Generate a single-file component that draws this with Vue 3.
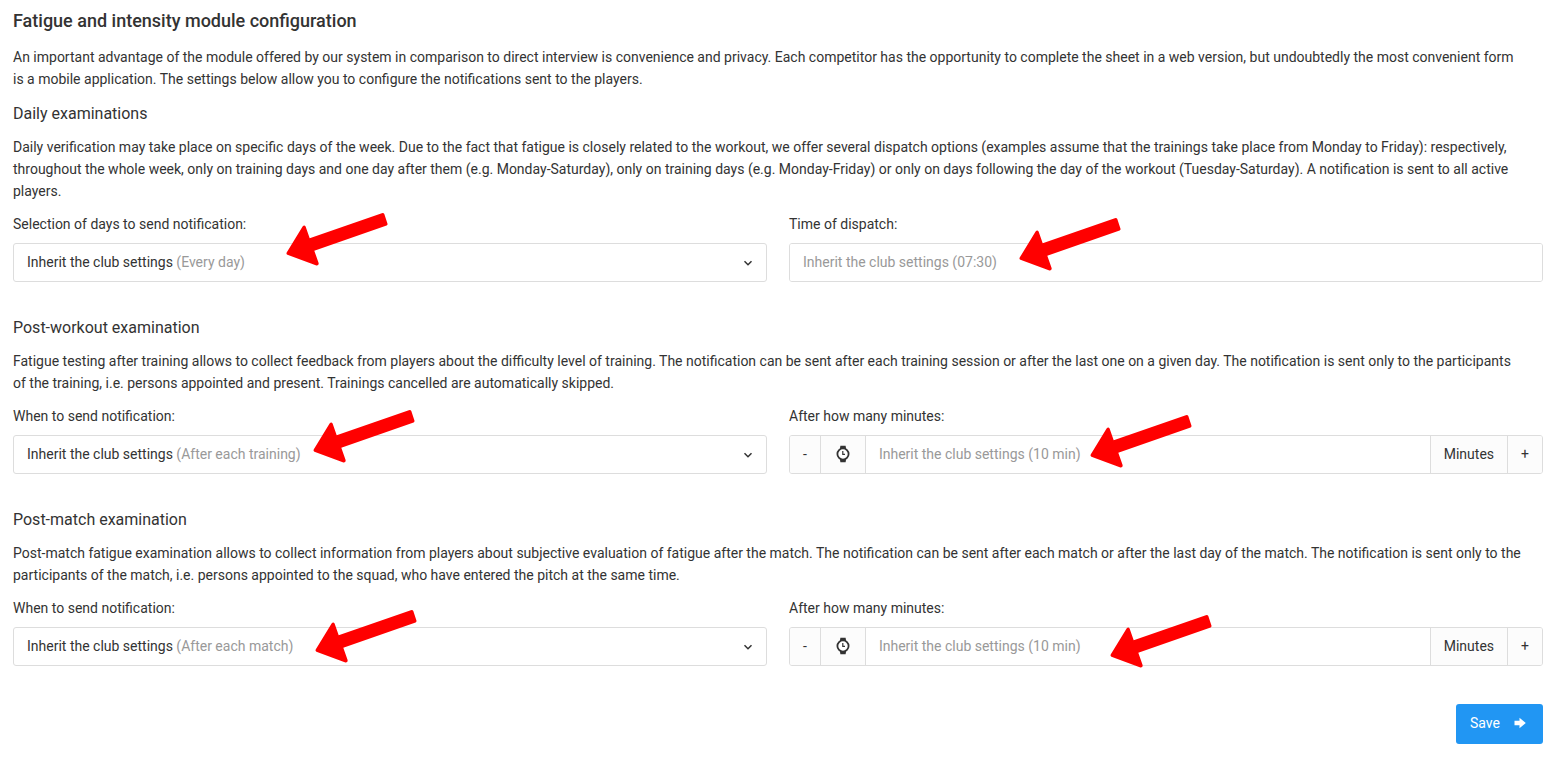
<template>
  <main class="page">
    <h1>Fatigue and intensity module configuration</h1>
    <p class="intro">
      An important advantage of the module offered by our system in comparison to direct interview is convenience and
      privacy. Each competitor has the opportunity to complete the sheet in a web version, but undoubtedly the most
      convenient form is a mobile application. The settings below allow you to configure the notifications sent to the
      players.
    </p>

    <form @submit.prevent>
      <section v-for="section in sections" :key="section.id">
        <h2>{{ section.title }}</h2>
        <p>{{ section.description }}</p>

        <div class="row">
          <div class="field">
            <label :for="section.id + '-when'">{{ section.whenLabel }}</label>
            <div class="select">
              <select :id="section.id + '-when'" v-model="section.when">
                <option v-for="option in section.options" :key="option" :value="option">{{ option }}</option>
              </select>
              <div class="select-value" aria-hidden="true">
                {{ section.when }}
                <span v-if="section.when === inherit" class="muted">({{ section.clubValue }})</span>
              </div>
              <svg class="caret" viewBox="0 0 10 10" aria-hidden="true">
                <path d="M1.5 3.2 5 6.7 8.5 3.2" />
              </svg>
            </div>
            <svg class="arrow" viewBox="0 0 102 55" :style="place(section.arrows[0])" aria-hidden="true">
              <path :d="arrowPath" />
            </svg>
          </div>

          <div class="field">
            <label :for="section.id + '-time'">{{ section.timeLabel }}</label>
            <div v-if="section.minutes" class="group">
              <button type="button" class="addon" aria-label="Decrease" @click="step(section, -1)">-</button>
              <span class="addon">
                <svg class="watch" viewBox="0 0 18 18" aria-hidden="true">
                  <path d="M5.8 4.2 6.4 0.8h5.2l0.6 3.4zM5.8 13.8l0.6 3.4h5.2l0.6-3.4z" />
                  <circle cx="9" cy="9" r="5.6" />
                  <path class="hands" d="M8.8 6v3.4h2.2" />
                </svg>
              </span>
              <input :id="section.id + '-time'" v-model="section.time" type="text" :placeholder="section.placeholder" />
              <span class="addon">Minutes</span>
              <button type="button" class="addon" aria-label="Increase" @click="step(section, 1)">+</button>
            </div>
            <div v-else class="group">
              <input :id="section.id + '-time'" v-model="section.time" type="text" :placeholder="section.placeholder" />
            </div>
            <svg class="arrow" viewBox="0 0 102 55" :style="place(section.arrows[1])" aria-hidden="true">
              <path :d="arrowPath" />
            </svg>
          </div>
        </div>
      </section>

      <div class="actions">
        <button type="submit" class="save">
          Save
          <svg viewBox="0 0 12 12" aria-hidden="true">
            <path d="M0.5 3.8h5V0.8L11.8 6 5.5 11.2V8.2h-5z" />
          </svg>
        </button>
      </div>
    </form>
  </main>
</template>

<script setup>
import { ref } from 'vue';

const inherit = 'Inherit the club settings';

const arrowPath =
  'M0.7 40.6 16.6 14.4Q18.4 12.6 19.6 14.6L23.7 26.3 95.8 1.2Q97.6 0.6 98.3 2L101.5 11.8Q101.7 13 100.6 13.5L28.3 38.7 32.7 51.2Q32.8 53.6 30.4 53.4L1.4 42.8Q0 42 0.7 40.6Z';

const sections = ref([
  {
    id: 'daily',
    title: 'Daily examinations',
    description:
      'Daily verification may take place on specific days of the week. Due to the fact that fatigue is closely related to the workout, we offer several dispatch options (examples assume that the trainings take place from Monday to Friday): respectively, throughout the whole week, only on training days and one day after them (e.g. Monday-Saturday), only on training days (e.g. Monday-Friday) or only on days following the day of the workout (Tuesday-Saturday). A notification is sent to all active players.',
    whenLabel: 'Selection of days to send notification:',
    when: inherit,
    clubValue: 'Every day',
    options: [inherit, 'Every day'],
    timeLabel: 'Time of dispatch:',
    time: '',
    placeholder: 'Inherit the club settings (07:30)',
    minutes: false,
    arrows: [[273, -1], [230, 4]],
  },
  {
    id: 'workout',
    title: 'Post-workout examination',
    description:
      'Fatigue testing after training allows to collect feedback from players about the difficulty level of training. The notification can be sent after each training session or after the last one on a given day. The notification is sent only to the participants of the training, i.e. persons appointed and present. Trainings cancelled are automatically skipped.',
    whenLabel: 'When to send notification:',
    when: inherit,
    clubValue: 'After each training',
    options: [inherit, 'After each training'],
    timeLabel: 'After how many minutes:',
    time: '',
    placeholder: 'Inherit the club settings (10 min)',
    minutes: true,
    arrows: [[300, 4], [301, 9]],
  },
  {
    id: 'match',
    title: 'Post-match examination',
    description:
      'Post-match fatigue examination allows to collect information from players about subjective evaluation of fatigue after the match. The notification can be sent after each match or after the last day of the match. The notification is sent only to the participants of the match, i.e. persons appointed to the squad, who have entered the pitch at the same time.',
    whenLabel: 'When to send notification:',
    when: inherit,
    clubValue: 'After each match',
    options: [inherit, 'After each match'],
    timeLabel: 'After how many minutes:',
    time: '',
    placeholder: 'Inherit the club settings (10 min)',
    minutes: true,
    arrows: [[302, 12], [321, 17]],
  },
]);

const place = ([x, y]) => ({ left: x + 'px', top: y + 'px' });

const step = (section, delta) => {
  section.time = String(Math.max(0, (Number(section.time) || 10) + delta));
};
</script>

<style>
body {
  margin: 0;
  background: #fff;
}
</style>

<style scoped>
.page {
  padding: 10px 14px 14px 13px;
  font-family: Roboto, 'Liberation Sans', sans-serif;
  font-size: 14px;
  line-height: 22px;
  color: #333;
}

h1 {
  margin: 0 0 14px;
  font-size: 18px;
  font-weight: 500;
}

h2 {
  margin: 0 0 11px;
  font-size: 16px;
  font-weight: 400;
}

p {
  margin: 0 0 11px;
  padding-right: 20px;
}

.intro {
  margin-bottom: 13px;
}

section {
  margin-bottom: 35px;
}

.row {
  display: grid;
  grid-template-columns: 1fr 1fr;
  gap: 22px;
}

.field {
  position: relative;
  min-width: 0;
}

label {
  display: block;
  margin-bottom: 8px;
}

button,
input,
select {
  font: inherit;
  color: inherit;
}

/* Select */
.select {
  display: grid;
  align-items: center;
  height: 37px;
  border: 1px solid #ddd;
  border-radius: 3px;
}

.select > * {
  grid-area: 1 / 1;
}

.select select {
  width: 100%;
  height: 100%;
  padding: 0 13px;
  border: 0;
  background: transparent;
  color: transparent;
  appearance: none;
}

.select option {
  color: #333;
}

.select-value {
  padding: 0 13px 2px;
  pointer-events: none;
}

.muted {
  color: #999;
}

.caret {
  justify-self: end;
  width: 10px;
  height: 10px;
  margin: 0 13px 0 0;
  fill: none;
  stroke: #333;
  stroke-width: 1.5;
  pointer-events: none;
}

/* Input with addons */
.group {
  display: flex;
  height: 37px;
  border: 1px solid #ddd;
  border-radius: 3px;
  overflow: hidden;
}

.group input {
  flex: 1;
  min-width: 0;
  padding: 0 13px 2px;
  border: 0;
  background: #fff;
}

.group input::placeholder {
  color: #999;
  opacity: 1;
}

.addon {
  display: flex;
  align-items: center;
  padding: 0 13px 2px;
  border: 0;
  background: #fcfcfc;
}

.addon + .addon,
.addon + input,
input + .addon {
  border-left: 1px solid #ddd;
}

.watch {
  width: 18px;
  height: 18px;
  fill: #333;
}

.watch circle {
  fill: #fff;
  stroke: #333;
  stroke-width: 1.8;
}

.watch .hands {
  fill: none;
  stroke: #333;
  stroke-width: 1.2;
}

/* Pointers */
.arrow {
  position: absolute;
  z-index: 1;
  width: 102px;
  height: 55px;
  fill: #f00;
  pointer-events: none;
}

.actions {
  display: flex;
  justify-content: flex-end;
  padding-top: 3px;
}

.save {
  display: flex;
  align-items: center;
  gap: 14px;
  height: 40px;
  padding: 0 17px 2px 14px;
  border: 0;
  border-radius: 3px;
  background: #2196f3;
  color: #fff;
  cursor: pointer;
}

.save svg {
  width: 12px;
  height: 12px;
  fill: #fff;
}
</style>
